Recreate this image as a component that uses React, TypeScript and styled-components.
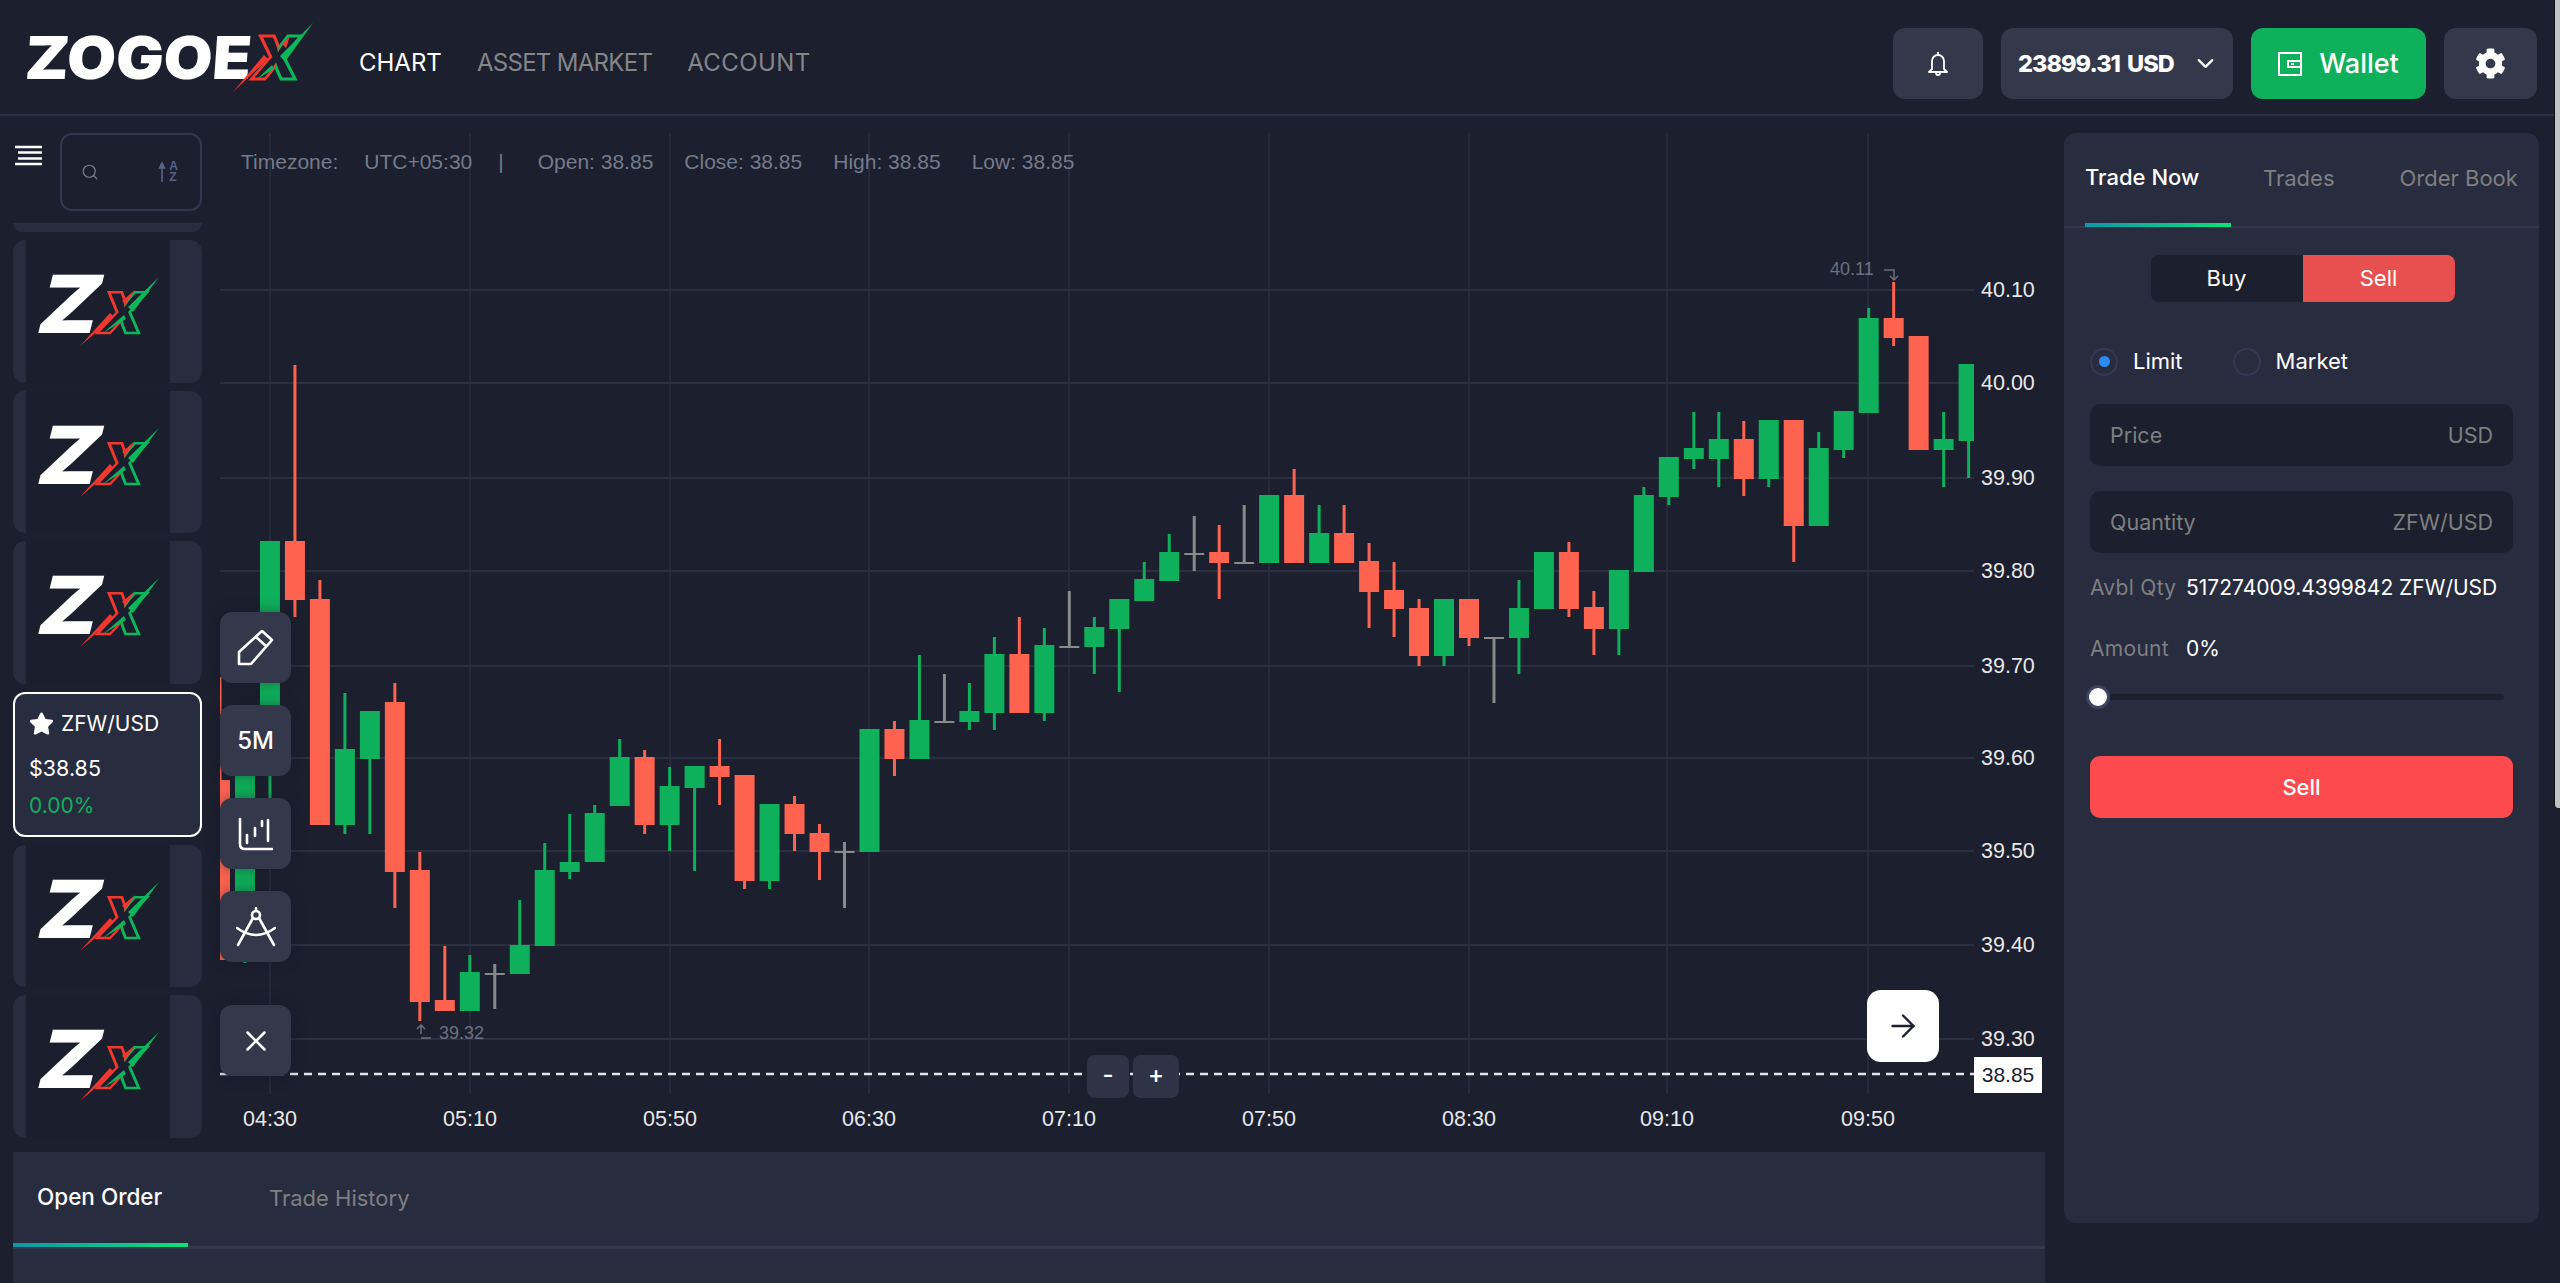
import React from "react";
import styled, { createGlobalStyle } from "styled-components";
import { ArrowRight, ChevronDown, Search, X } from "lucide-react";
import { FaCog, FaStar } from "react-icons/fa";

const UI_FONT = `Inter, "Noto Sans", sans-serif`;
const CHART_FONT = `"Liberation Sans", Arial, sans-serif`;

const GREEN = "#0fb05c";
const RED = "#fe6350";
const GREY = "#8a8a8a";

const GlobalStyle = createGlobalStyle`
  html, body {
    margin: 0;
    padding: 0;
    background: #1b1f2e;
    font-family: ${UI_FONT};
    color: #fff;
  }
  * {
    box-sizing: border-box;
  }
`;

// x is worked out from the index, candles sit 25px apart
type Candle = [type: "g" | "r" | "n", high: number, top: number, bottom: number, low: number];

const candles: Candle[] = [
  ["r", 677, 780, 960, 960],
  ["g", 720, 770, 950, 963],
  ["g", 541, 541, 770, 810],
  ["r", 365, 541, 600, 617],
  ["r", 580, 599, 825, 825],
  ["g", 693, 749, 825, 834],
  ["g", 711, 711, 759, 834],
  ["r", 683, 702, 872, 908],
  ["r", 852, 870, 1002, 1021],
  ["r", 946, 1000, 1011, 1011],
  ["g", 955, 972, 1011, 1011],
  ["n", 964, 973, 975, 1009],
  ["g", 900, 945, 974, 974],
  ["g", 843, 870, 946, 946],
  ["g", 814, 862, 872, 879],
  ["g", 805, 813, 862, 862],
  ["g", 739, 757, 806, 806],
  ["r", 750, 757, 825, 834],
  ["g", 767, 786, 825, 851],
  ["g", 766, 766, 788, 871],
  ["r", 739, 766, 777, 805],
  ["r", 775, 775, 881, 889],
  ["g", 804, 804, 881, 889],
  ["r", 796, 804, 834, 851],
  ["r", 824, 833, 852, 880],
  ["n", 842, 851, 853, 908],
  ["g", 729, 729, 852, 852],
  ["r", 721, 729, 759, 776],
  ["g", 655, 720, 759, 759],
  ["n", 674, 721, 723, 723],
  ["g", 683, 711, 722, 730],
  ["g", 637, 654, 713, 730],
  ["r", 617, 654, 713, 713],
  ["g", 628, 645, 713, 721],
  ["n", 591, 646, 648, 648],
  ["g", 617, 627, 647, 674],
  ["g", 599, 599, 629, 692],
  ["g", 562, 579, 601, 601],
  ["g", 534, 552, 581, 581],
  ["n", 516, 553, 555, 571],
  ["r", 525, 552, 563, 599],
  ["n", 505, 562, 564, 564],
  ["g", 495, 495, 563, 563],
  ["r", 469, 495, 563, 563],
  ["g", 505, 533, 563, 563],
  ["r", 505, 533, 563, 563],
  ["r", 543, 561, 592, 628],
  ["r", 562, 590, 609, 637],
  ["r", 599, 608, 656, 666],
  ["g", 599, 599, 656, 666],
  ["r", 599, 599, 638, 646],
  ["n", 637, 637, 639, 703],
  ["g", 580, 608, 638, 674],
  ["g", 552, 552, 609, 609],
  ["r", 542, 552, 609, 617],
  ["r", 591, 607, 629, 655],
  ["g", 570, 570, 629, 655],
  ["g", 487, 495, 572, 572],
  ["g", 457, 457, 497, 505],
  ["g", 412, 448, 459, 469],
  ["g", 412, 439, 459, 487],
  ["r", 421, 439, 479, 496],
  ["g", 420, 420, 479, 487],
  ["r", 420, 420, 526, 562],
  ["g", 432, 448, 526, 526],
  ["g", 411, 411, 450, 458],
  ["g", 308, 318, 413, 413],
  ["r", 282, 318, 338, 346],
  ["r", 336, 336, 450, 450],
  ["g", 412, 439, 450, 487],
  ["g", 364, 364, 441, 478],
];

const priceLines = [
  { y: 290, label: "40.10" },
  { y: 383, label: "40.00" },
  { y: 478, label: "39.90" },
  { y: 571, label: "39.80" },
  { y: 666, label: "39.70" },
  { y: 758, label: "39.60" },
  { y: 851, label: "39.50" },
  { y: 945, label: "39.40" },
  { y: 1039, label: "39.30" },
];

const timeLines = [
  { x: 270, label: "04:30" },
  { x: 470, label: "05:10" },
  { x: 670, label: "05:50" },
  { x: 869, label: "06:30" },
  { x: 1069, label: "07:10" },
  { x: 1269, label: "07:50" },
  { x: 1469, label: "08:30" },
  { x: 1667, label: "09:10" },
  { x: 1868, label: "09:50" },
];

const infoItems = ["Open: 38.85", "Close: 38.85", "High: 38.85", "Low: 38.85"];

const candleColor = { g: GREEN, r: RED, n: GREY };

const PriceChart = () => (
  <ChartSvg viewBox="220 133 1830 1000" width={1830} height={1000}>
    <defs>
      <clipPath id="plot">
        <rect x={220} y={133} width={1754} height={961} />
      </clipPath>
    </defs>
    {timeLines.map(({ x }) => (
      <line key={x} x1={x} x2={x} y1={133} y2={1094} stroke="#2b2f40" strokeWidth={1.5} />
    ))}
    {priceLines.map(({ y }) => (
      <line key={y} x1={220} x2={1974} y1={y} y2={y} stroke="#2b2f40" strokeWidth={2} />
    ))}
    <g clipPath="url(#plot)">
      {candles.map(([type, high, top, bottom, low], i) => {
        const x = 220 + i * 24.98;
        return (
          <g key={i} fill={candleColor[type]}>
            <rect x={x - 1.5} y={high} width={3} height={low - high} />
            <rect x={x - 10} y={top} width={20} height={bottom - top} />
          </g>
        );
      })}
    </g>

    <line x1={220} x2={1974} y1={1074} y2={1074} stroke="#e4e4e6" strokeWidth={2.5} strokeDasharray="8 6" />

    <ChartNote x={1830} y={275}>40.11</ChartNote>
    <path d="M1884 270h10v10m-4-4l4 4 4-4" fill="none" stroke="#6b7080" strokeWidth={1.5} />
    <ChartNote x={439} y={1039}>39.32</ChartNote>
    <path d="M421 1034v-9m-4 4l4-4 4 4m-4 9h10" fill="none" stroke="#6b7080" strokeWidth={1.5} />

    {priceLines.map(({ y, label }) => (
      <AxisText key={label} x={1981} y={y + 7}>{label}</AxisText>
    ))}
    {timeLines.map(({ x, label }) => (
      <AxisText key={label} x={x} y={1126} textAnchor="middle">{label}</AxisText>
    ))}
  </ChartSvg>
);

// logo mark, the two letters stay real text and only the slashes are shapes
const ZxMark = () => (
  <svg width={136} height={108} viewBox="-6 -24 136 108">
    <defs>
      <linearGradient id="markX" x1="0" x2="1" y1="0" y2="0">
        <stop offset="0.47" stopColor="#f2372e" />
        <stop offset="0.53" stopColor="#0cb65a" />
      </linearGradient>
    </defs>
    <LogoLetter transform="translate(-2 58) skewX(-14) scale(1.08 1)" fontSize={80} fill="#fff">
      Z
    </LogoLetter>
    <LogoLetter
      transform="translate(60 58) skewX(-14)"
      fontSize={56}
      fontWeight={800}
      fill="#1a1e2d"
      stroke="url(#markX)"
      strokeWidth={2.6}
    >
      X
    </LogoLetter>
    <polygon points="44,71 74,38 78,42" fill="#f2372e" />
    <polygon points="86,26 99,15 90,29" fill="#f2372e" />
    <polygon points="67,58 88,40 90,44" fill="#0cb65a" />
    <polygon points="92,32 123,2 97,37" fill="#0cb65a" />
  </svg>
);

const MainLogo = () => (
  <svg width={300} height={74} viewBox="0 0 300 74">
    <defs>
      <linearGradient id="mainX" x1="0" x2="1" y1="0" y2="0">
        <stop offset="0.47" stopColor="#f2372e" />
        <stop offset="0.53" stopColor="#0cb65a" />
      </linearGradient>
    </defs>
    <LogoLetter
      transform="translate(0 59) skewX(-4)"
      fontSize={59}
      fill="#fff"
      textLength={226}
      lengthAdjust="spacingAndGlyphs"
    >
      ZOGOE
    </LogoLetter>
    <LogoLetter
      transform="translate(226 59) skewX(-10)"
      fontSize={59}
      fontWeight={800}
      fill="#1a1e2d"
      stroke="url(#mainX)"
      strokeWidth={3}
    >
      X
    </LogoLetter>
    <polygon points="209,72 240,35 244,39" fill="#f2372e" />
    <polygon points="258,24 266,16 262,28" fill="#f2372e" />
    <polygon points="233,59 248,45 250,49" fill="#0cb65a" />
    <polygon points="256,36 289,3 261,42" fill="#0cb65a" />
  </svg>
);

const WalletIcon = () => (
  <svg width={24} height={24} viewBox="0 0 24 24" fill="none" stroke="#fff" strokeWidth={2}>
    <rect x={1} y={1} width={22} height={22} />
    <path d="M23 9H10v6h13" />
    <path d="M13 12h3" />
  </svg>
);

const BellIcon = () => (
  <svg width={20} height={26} viewBox="0 0 20 26" fill="none" stroke="#fff" strokeWidth={1.8} strokeLinejoin="round">
    <path d="M10 1v3" />
    <path d="M4 18V10a6 6 0 0 1 12 0v8l3 3H1z" />
    <path d="M8 22a2 2 0 0 0 4 0" />
  </svg>
);

const PenIcon = () => (
  <svg width={37} height={37} viewBox="0 0 37 37" fill="none" stroke="#fff" strokeWidth={2.6} strokeLinejoin="round">
    <path d="M25 2l10 9-21 24H2V23z" />
    <path d="M19 8l10 9" />
  </svg>
);

const BarsIcon = () => (
  <svg width={35} height={34} viewBox="0 0 35 34" fill="none" stroke="#fff" strokeWidth={2.6} strokeLinecap="round">
    <path d="M2 2v25q0 5 5 5h27" />
    <path d="M9 18v8M17 11v8M24 4v5M30 3v21" />
  </svg>
);

const CompassIcon = () => (
  <svg width={40} height={40} viewBox="0 0 40 40" fill="none" stroke="#fff" strokeWidth={2.6} strokeLinecap="round">
    <path d="M20 1v3" />
    <circle cx={20} cy={8} r={4} />
    <path d="M17 11L2 38M23 11l15 27" />
    <path d="M1 21q19 14 38 0" />
  </svg>
);

const MenuIcon = () => (
  <svg width={27} height={21} viewBox="0 0 27 21" stroke="#fff" strokeWidth={2.4}>
    <path d="M0 2h27M3 7.5h24M3 13.5h24M0 19h27" />
  </svg>
);

const SortIcon = () => (
  <SortText>
    <SortArrow viewBox="0 0 8 20" width={8} height={20}>
      <path d="M4 20V3M1.5 6L4 1l2.5 5z" stroke="#5b6287" strokeWidth={1.6} fill="#5b6287" />
    </SortArrow>
    <SortLetters>
      <span>A</span>
      <span>Z</span>
    </SortLetters>
  </SortText>
);

export default function App() {
  return (
    <>
      <GlobalStyle />
      <Page>
        <Header>
          <LogoBox>
            <MainLogo />
          </LogoBox>
          <Nav>
            <NavLink $active>CHART</NavLink>
            <NavLink $spacing={-0.7}>ASSET MARKET</NavLink>
            <NavLink $spacing={0.4}>ACCOUNT</NavLink>
          </Nav>
          <HeaderActions>
            <BellButton>
              <BellIcon />
            </BellButton>
            <BalanceButton>
              <span>23899.31 USD</span>
              <ChevronDown size={27} strokeWidth={2} color="#fff" />
            </BalanceButton>
            <WalletButton>
              <WalletIcon />
              Wallet
            </WalletButton>
            <SettingsButton>
              <FaCog size={31} color="#fff" />
            </SettingsButton>
          </HeaderActions>
        </Header>

        <Main>
          <LeftColumn>
            <ChartRow>
              <Sidebar>
                <SearchRow>
                  <MenuSlot>
                    <MenuIcon />
                  </MenuSlot>
                  <SearchBox>
                    <Search size={18} strokeWidth={1.6} color="#7c8088" />
                    <SortIcon />
                  </SearchBox>
                </SearchRow>
                <CardList>
                  <CardStub />
                  <LogoCard><CardInner><ZxMark /></CardInner></LogoCard>
                  <LogoCard><CardInner><ZxMark /></CardInner></LogoCard>
                  <LogoCard><CardInner><ZxMark /></CardInner></LogoCard>
                  <PairCard>
                    <PairName>
                      <FaStar size={25} color="#fff" />
                      ZFW/USD
                    </PairName>
                    <PairPrice>$38.85</PairPrice>
                    <PairChange>0.00%</PairChange>
                  </PairCard>
                  <LogoCard><CardInner><ZxMark /></CardInner></LogoCard>
                  <LogoCard><CardInner><ZxMark /></CardInner></LogoCard>
                </CardList>
              </Sidebar>

              <ChartArea>
                <PriceChart />
                <InfoBar>
                  <InfoLabel>Timezone:</InfoLabel>
                  <InfoLabel>UTC+05:30</InfoLabel>
                  <InfoDivider>|</InfoDivider>
                  <InfoGroup>
                    {infoItems.map((item) => (
                      <InfoLabel key={item}>{item}</InfoLabel>
                    ))}
                  </InfoGroup>
                </InfoBar>
                <ToolBar>
                  <ToolButton><PenIcon /></ToolButton>
                  <ToolButton>5M</ToolButton>
                  <ToolButton><BarsIcon /></ToolButton>
                  <ToolButton><CompassIcon /></ToolButton>
                  <ToolButton $apart><X size={34} strokeWidth={1.8} color="#fff" /></ToolButton>
                </ToolBar>
                <ZoomControls>
                  <ZoomButton $w={42}>-</ZoomButton>
                  <ZoomButton $w={46}>+</ZoomButton>
                </ZoomControls>
                <ScrollButton>
                  <ArrowRight size={36} strokeWidth={1.6} color="#1b1f2e" />
                </ScrollButton>
                <PriceTag>38.85</PriceTag>
              </ChartArea>
            </ChartRow>

            <OrdersPanel>
              <OrderTabs>
                <OrderTab $active>Open Order</OrderTab>
                <OrderTab>Trade History</OrderTab>
              </OrderTabs>
            </OrdersPanel>
          </LeftColumn>

          <TradePanel>
            <TradeTabs>
              <TradeTab $active>Trade Now</TradeTab>
              <TradeTab $gap={32}>Trades</TradeTab>
              <TradeTab $gap={65}>Order Book</TradeTab>
            </TradeTabs>
            <TradeBody>
              <SideSwitch>
                <SideOption>Buy</SideOption>
                <SideOption $active>Sell</SideOption>
              </SideSwitch>
              <RadioRow>
                <RadioLabel>
                  <RadioDot $checked />
                  Limit
                </RadioLabel>
                <RadioLabel>
                  <RadioDot />
                  Market
                </RadioLabel>
              </RadioRow>
              <Field $top={28}>
                <span>Price</span>
                <span>USD</span>
              </Field>
              <Field $top={25}>
                <span>Quantity</span>
                <span>ZFW/USD</span>
              </Field>
              <StatRow $top={22}>
                <StatLabel>Avbl Qty</StatLabel>
                <StatValue>517274009.4399842 ZFW/USD</StatValue>
              </StatRow>
              <StatRow $top={35}>
                <StatLabel>Amount</StatLabel>
                <StatValue>0%</StatValue>
              </StatRow>
              <Slider>
                <SliderThumb />
              </Slider>
              <SellButton>Sell</SellButton>
            </TradeBody>
          </TradePanel>
        </Main>
        <ScrollThumb />
      </Page>
    </>
  );
}

const Page = styled.div`
  position: relative;
  width: 2560px;
  height: 1283px;
  overflow: hidden;
  background: #1b1f2e;
`;

const Header = styled.header`
  display: flex;
  align-items: flex-start;
  height: 116px;
  padding: 20px 23px 0 24px;
  border-bottom: 2px solid #2a2e42;
`;

const LogoBox = styled.div`
  width: 335px;
  height: 74px;
  flex: none;
`;

const Nav = styled.nav`
  display: flex;
  align-items: center;
  gap: 35px;
  height: 84px;
`;

const NavLink = styled.a<{ $active?: boolean; $spacing?: number }>`
  font-size: 24px;
  font-weight: 400;
  letter-spacing: ${(p) => p.$spacing ?? 0}px;
  color: ${(p) => (p.$active ? "#fff" : "#85868a")};
`;

const HeaderActions = styled.div`
  display: flex;
  gap: 18px;
  margin-left: auto;
  padding-top: 8px;
`;

const HeaderButton = styled.div`
  display: flex;
  align-items: center;
  justify-content: center;
  height: 71px;
  border-radius: 12px;
  background: #33384b;
  color: #fff;
`;

const BellButton = styled(HeaderButton)`
  width: 90px;
`;

const BalanceButton = styled(HeaderButton)`
  justify-content: space-between;
  width: 232px;
  padding: 0 14px 0 17px;
  font-size: 23.5px;
  font-weight: 800;
  letter-spacing: -1px;
  word-spacing: 3px;
`;

const WalletButton = styled(HeaderButton)`
  gap: 17px;
  width: 175px;
  background: #0fb05c;
  font-size: 27px;
  font-weight: 500;
`;

const SettingsButton = styled(HeaderButton)`
  width: 93px;
`;

const Main = styled.main`
  display: flex;
  padding: 17px 21px 0 13px;
  gap: 19px;
`;

const LeftColumn = styled.div`
  display: flex;
  flex-direction: column;
  width: 2032px;
  flex: none;
`;

const ChartRow = styled.div`
  display: flex;
  gap: 18px;
  height: 1019px;
`;

const Sidebar = styled.aside`
  display: flex;
  flex-direction: column;
  width: 189px;
  flex: none;
`;

const SearchRow = styled.div`
  display: flex;
  height: 90px;
`;

const MenuSlot = styled.div`
  width: 47px;
  padding: 12px 0 0 2px;
  flex: none;
`;

const SearchBox = styled.div`
  display: flex;
  align-items: center;
  justify-content: space-between;
  width: 142px;
  height: 78px;
  padding: 0 22px 0 19px;
  border: 2px solid #33384f;
  border-radius: 12px;
`;

const SortText = styled.div`
  display: flex;
  align-items: center;
  gap: 3px;
`;

const SortArrow = styled.svg`
  display: block;
`;

const SortLetters = styled.div`
  display: flex;
  flex-direction: column;
  font-family: ${CHART_FONT};
  font-size: 12px;
  font-weight: 700;
  line-height: 11px;
  color: #5b6287;
`;

const CardList = styled.div`
  display: flex;
  flex-direction: column;
  gap: 8px;
`;

const CardStub = styled.div`
  height: 9px;
  border-radius: 0 0 12px 12px;
  background: #282c3f;
`;

const LogoCard = styled.div`
  height: 142.5px;
  padding: 0 32px 0 13px;
  border-radius: 12px;
  background: #282c3f;
`;

const CardInner = styled.div`
  display: flex;
  align-items: flex-start;
  height: 100%;
  padding: 11px 0 0 4px;
  background: #1a1e2d;
`;

const PairCard = styled.div`
  display: flex;
  flex-direction: column;
  height: 145px;
  padding: 15px 0 0 14px;
  border: 2px solid #fff;
  border-radius: 12px;
  background: #282c3f;
`;

const PairName = styled.div`
  display: flex;
  align-items: center;
  gap: 7px;
  font-size: 21px;
  line-height: 30px;
`;

const PairPrice = styled.div`
  margin-top: 14px;
  font-size: 21.5px;
  line-height: 30px;
`;

const PairChange = styled.div`
  margin-top: 8px;
  font-size: 21px;
  line-height: 30px;
  color: #0fb05c;
`;

const ChartArea = styled.section`
  position: relative;
  width: 1825px;
  flex: none;
`;

const ChartSvg = styled.svg`
  display: block;
`;

const ChartNote = styled.text`
  font-family: ${CHART_FONT};
  font-size: 18px;
  fill: #6b7080;
`;

const AxisText = styled.text`
  font-family: ${CHART_FONT};
  font-size: 21.5px;
  fill: #e8e8ea;
`;

const LogoLetter = styled.text`
  font-family: ${UI_FONT};
  font-weight: 900;
`;

const InfoBar = styled.div`
  position: absolute;
  top: 16px;
  left: 21px;
  display: flex;
  align-items: center;
  gap: 26px;
  font-family: ${CHART_FONT};
  font-size: 21px;
  line-height: 26px;
  color: #747b8a;
`;

const InfoGroup = styled.div`
  display: flex;
  gap: 31px;
`;

const InfoLabel = styled.span`
  white-space: nowrap;
`;

const InfoDivider = styled.span`
  margin-right: 8px;
`;

const ToolBar = styled.div`
  position: absolute;
  top: 479px;
  left: 0;
  display: flex;
  flex-direction: column;
  gap: 22px;
`;

const ToolButton = styled.div<{ $apart?: boolean }>`
  display: flex;
  align-items: center;
  justify-content: center;
  width: 71px;
  height: 71px;
  margin-top: ${(p) => (p.$apart ? "21px" : "0")};
  border-radius: 12px;
  background: #33384b;
  box-shadow: 0 0 14px rgba(20, 24, 36, 0.45);
  font-size: 24px;
  font-weight: 500;
  color: #fff;
`;

const ZoomControls = styled.div`
  position: absolute;
  top: 922px;
  left: 867px;
  display: flex;
  gap: 4px;
`;

const ZoomButton = styled.div<{ $w: number }>`
  display: flex;
  align-items: center;
  justify-content: center;
  width: ${(p) => p.$w}px;
  height: 43px;
  padding-bottom: 4px;
  border-radius: 8px;
  background: #2f3346;
  font-size: 24px;
  font-weight: 500;
  color: #fff;
`;

const ScrollButton = styled.div`
  position: absolute;
  top: 857px;
  left: 1647px;
  display: flex;
  align-items: center;
  justify-content: center;
  width: 72px;
  height: 72px;
  border-radius: 14px;
  background: #fff;
`;

const PriceTag = styled.div`
  position: absolute;
  top: 924px;
  left: 1754px;
  width: 68px;
  height: 36px;
  background: #fff;
  font-family: ${CHART_FONT};
  font-size: 21px;
  line-height: 36px;
  text-align: center;
  color: #1b1f2e;
`;

const OrdersPanel = styled.section`
  height: 131px;
  background: #282c3f;
`;

const OrderTabs = styled.div`
  display: flex;
  height: 97px;
  border-bottom: 3px solid #33384f;
`;

const OrderTab = styled.div<{ $active?: boolean }>`
  position: relative;
  display: flex;
  align-items: center;
  width: ${(p) => (p.$active ? "175px" : "auto")};
  margin-left: ${(p) => (p.$active ? "0" : "81px")};
  padding: ${(p) => (p.$active ? "0 0 6px 24px" : "0 0 2px 0")};
  font-size: ${(p) => (p.$active ? "22.5px" : "22px")};
  font-weight: ${(p) => (p.$active ? 500 : 400)};
  white-space: nowrap;
  color: ${(p) => (p.$active ? "#fff" : "#7f7f80")};

  &::after {
    content: "";
    display: ${(p) => (p.$active ? "block" : "none")};
    position: absolute;
    left: 0;
    right: 0;
    bottom: -1px;
    height: 4px;
    background: linear-gradient(90deg, #1295a8, #12e07a);
  }
`;

const TradePanel = styled.aside`
  width: 475px;
  height: 1090px;
  flex: none;
  border-radius: 12px;
  background: #282c3f;
`;

const TradeTabs = styled.div`
  display: flex;
  height: 95px;
  padding-left: 21px;
  border-bottom: 2px solid #33384f;
`;

const TradeTab = styled.div<{ $active?: boolean; $gap?: number }>`
  position: relative;
  display: flex;
  align-items: center;
  width: ${(p) => (p.$active ? "146px" : "auto")};
  margin-left: ${(p) => p.$gap ?? 0}px;
  padding-bottom: ${(p) => (p.$active ? "6px" : "4px")};
  font-size: 22px;
  font-weight: ${(p) => (p.$active ? 500 : 400)};
  white-space: nowrap;
  color: ${(p) => (p.$active ? "#fff" : "#7f7f80")};

  &::after {
    content: "";
    display: ${(p) => (p.$active ? "block" : "none")};
    position: absolute;
    left: 0;
    right: 0;
    bottom: -1px;
    height: 4px;
    background: linear-gradient(90deg, #1295a8, #12e07a);
  }
`;

const TradeBody = styled.div`
  display: flex;
  flex-direction: column;
  padding: 27px 26px 0;
`;

const SideSwitch = styled.div`
  display: flex;
  align-self: center;
  width: 304px;
  height: 47px;
  margin-left: 2px;
  border-radius: 8px;
  overflow: hidden;
  background: #1b1f2e;
`;

const SideOption = styled.div<{ $active?: boolean }>`
  flex: 1;
  font-size: 22px;
  line-height: 47px;
  text-align: center;
  color: #fff;
  background: ${(p) => (p.$active ? "#e85050" : "transparent")};
`;

const RadioRow = styled.div`
  display: flex;
  gap: 50px;
  margin-top: 45px;
`;

const RadioLabel = styled.div`
  display: flex;
  align-items: center;
  gap: 15px;
  font-size: 22px;
  line-height: 29px;
  color: #fff;
`;

const RadioDot = styled.span<{ $checked?: boolean }>`
  display: flex;
  align-items: center;
  justify-content: center;
  width: 28px;
  height: 28px;
  border: 2px solid #333954;
  border-radius: 50%;

  &::after {
    content: "";
    display: ${(p) => (p.$checked ? "block" : "none")};
    width: 11px;
    height: 11px;
    border-radius: 50%;
    background: #2c8cf4;
  }
`;

const Field = styled.div<{ $top: number }>`
  display: flex;
  align-items: center;
  justify-content: space-between;
  height: 62px;
  margin-top: ${(p) => p.$top}px;
  padding: 0 20px;
  border-radius: 10px;
  background: #1b1f2e;
  font-size: 21.5px;
  color: #7f7f80;
`;

const StatRow = styled.div<{ $top: number }>`
  display: flex;
  margin-top: ${(p) => p.$top}px;
  font-size: 21px;
  line-height: 26px;
  white-space: nowrap;
`;

const StatLabel = styled.span`
  width: 96px;
  letter-spacing: 0.3px;
  color: #7f7f80;
`;

const StatValue = styled.span`
  color: #fff;
`;

const Slider = styled.div`
  position: relative;
  height: 6px;
  width: 414px;
  margin-top: 32px;
  border-radius: 3px;
  background: #1b1f2e;
`;

const SliderThumb = styled.span`
  position: absolute;
  top: -9px;
  left: -4px;
  width: 24px;
  height: 24px;
  border: 3px solid #3d4260;
  border-radius: 50%;
  background: #fff;
`;

const SellButton = styled.div`
  height: 62px;
  margin-top: 56px;
  border-radius: 10px;
  background: #fd4a4f;
  font-size: 22px;
  font-weight: 500;
  line-height: 62px;
  text-align: center;
  color: #fff;
`;

const ScrollThumb = styled.div`
  position: absolute;
  top: 0;
  right: 0;
  width: 6px;
  height: 808px;
  border-left: 1px solid #0d0f16;
  border-radius: 0 0 0 4px;
  background: #c2c2c4;
`;
